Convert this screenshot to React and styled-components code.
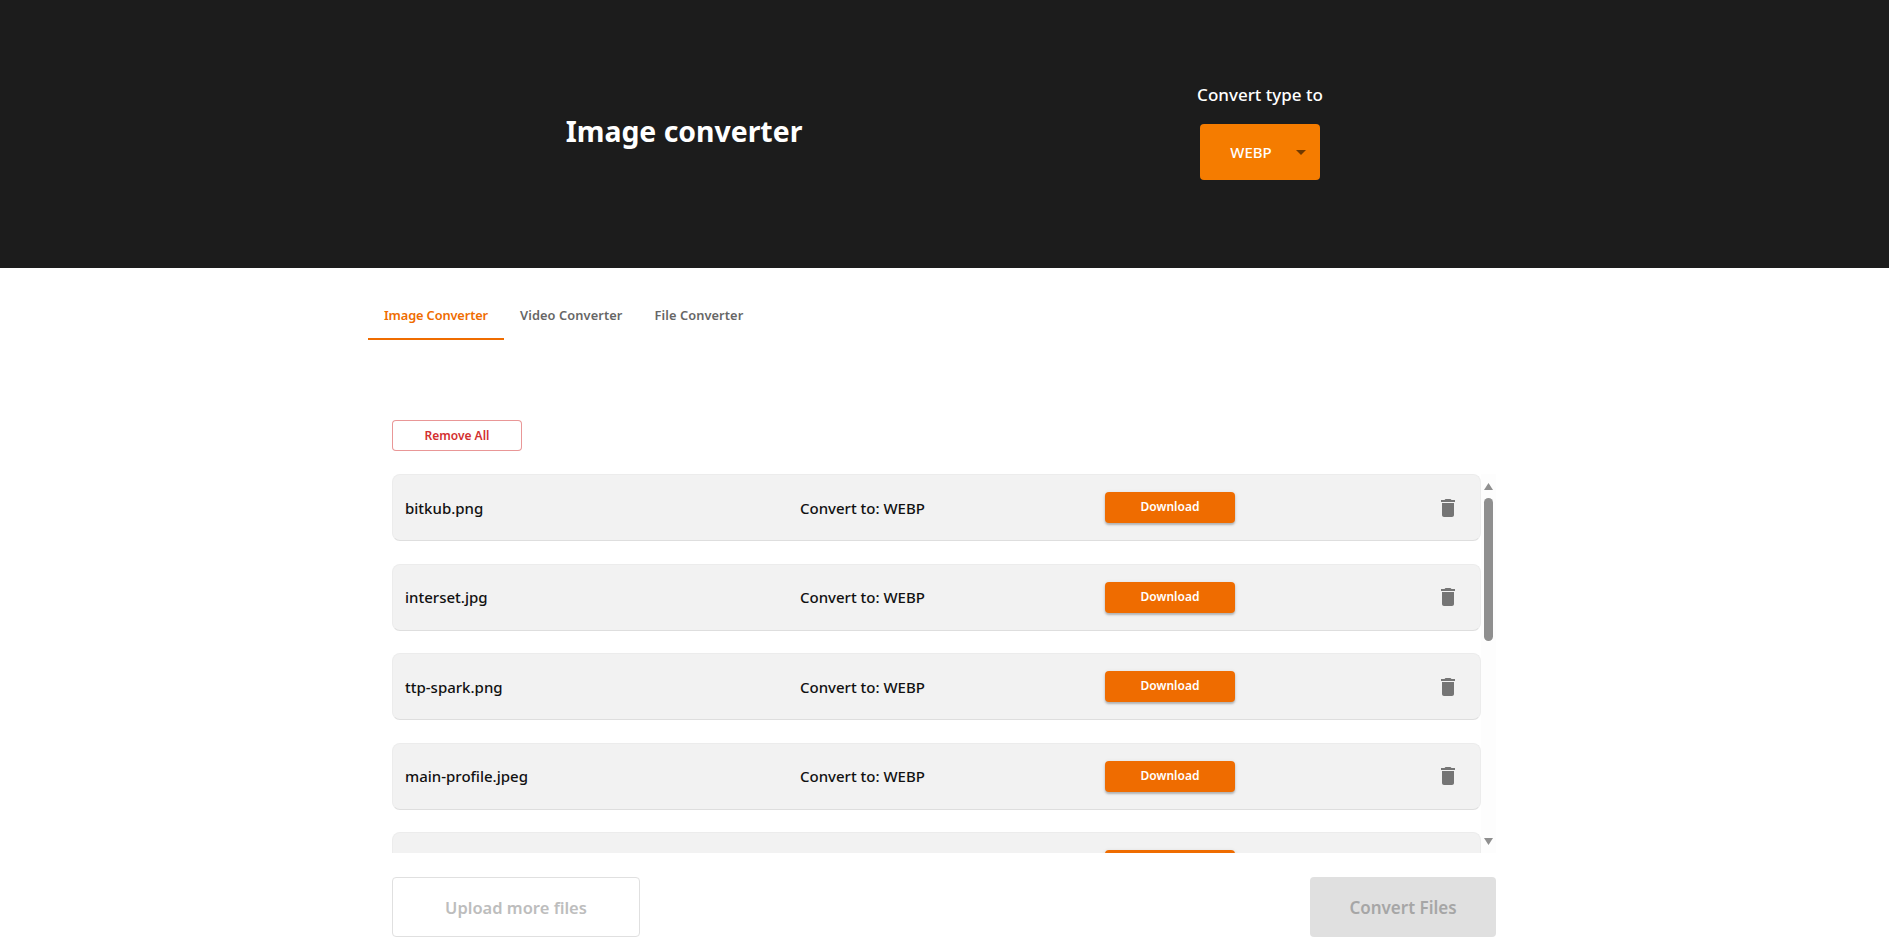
import React from 'react'
import styled, { createGlobalStyle } from 'styled-components'

// the fifth row is cut off by the list, only its top edge and button show
const files = ['bitkub.png', 'interset.jpg', 'ttp-spark.png', 'main-profile.jpeg', null]
const tabs = ['Image Converter', 'Video Converter', 'File Converter']

const DeleteIcon = () => (
  <svg width='24' height='24' viewBox='0 0 24 24' fill='currentColor'>
    <path d='M6 19c0 1.1.9 2 2 2h8c1.1 0 2-.9 2-2V7H6v12zM19 4h-3.5l-1-1h-5l-1 1H5v2h14V4z' />
  </svg>
)

const FileRow = ({ name }) => (
  <Row>
    <FileName>{name}</FileName>
    <Target>{name && 'Convert to: WEBP'}</Target>
    <div>
      <DownloadButton>{name && 'Download'}</DownloadButton>
    </div>
    <IconButton aria-label='delete'>
      <DeleteIcon />
    </IconButton>
  </Row>
)

export default function App() {
  return (
    <>
      <GlobalStyle />
      <Header>
        <Title>Image converter</Title>
        <TypePicker>
          <PickerLabel>Convert type to</PickerLabel>
          <Select>
            <SelectValue>WEBP</SelectValue>
            <SelectArrow width='24' height='24' viewBox='0 0 24 24' fill='currentColor'>
              <path d='M7 10l5 5 5-5z' />
            </SelectArrow>
          </Select>
        </TypePicker>
      </Header>
      <Main>
        <Tabs>
          {tabs.map((t, i) => (
            <Tab key={t} active={i === 0}>
              {t}
            </Tab>
          ))}
        </Tabs>
        <Panel>
          <RemoveAll>Remove All</RemoveAll>
          <ListBox>
            <FileList>
              {files.map((f, i) => (
                <FileRow key={i} name={f} />
              ))}
            </FileList>
            <ScrollRail>
              <svg width='9' height='7' viewBox='0 0 9 7' fill='currentColor'>
                <path d='M4.5 0L9 7H0z' />
              </svg>
              <ScrollThumb />
              <svg width='9' height='7' viewBox='0 0 9 7' fill='currentColor'>
                <path d='M0 0h9L4.5 7z' />
              </svg>
            </ScrollRail>
          </ListBox>
          <Footer>
            <UploadButton>Upload more files</UploadButton>
            <ConvertButton disabled>Convert Files</ConvertButton>
          </Footer>
        </Panel>
      </Main>
    </>
  )
}

const GlobalStyle = createGlobalStyle`
  html, body {
    margin: 0;
    height: 100%;
    overflow: hidden;
    background: #fff;
    font-family: 'Noto Sans', 'Open Sans', sans-serif;
  }
  button {
    font-family: inherit;
    cursor: pointer;
  }
`
const Header = styled.header`
  height: 268px;
  background: #1c1c1c;
  color: #fff;
  display: grid;
  grid-template-columns: 576px 576px;
  justify-content: center;
  padding-left: 55px;
  box-sizing: border-box;
`
const Title = styled.h1`
  margin: 0;
  align-self: start;
  justify-self: center;
  padding-top: 110px;
  font-size: 28.4px;
  line-height: 42px;
  font-weight: 700;
`
const TypePicker = styled.div`
  display: flex;
  flex-direction: column;
  align-items: center;
  padding-top: 82px;
`
const PickerLabel = styled.div`
  font-size: 17px;
  line-height: 26px;
  font-weight: 500;
  margin-bottom: 16px;
`
const Select = styled.div`
  width: 120px;
  height: 56px;
  box-sizing: border-box;
  padding-right: 7px;
  display: flex;
  align-items: center;
  background: #f57c00;
  border-radius: 4px;
`
const SelectValue = styled.span`
  flex: 1;
  text-align: center;
  font-size: 15px;
  font-weight: 500;
`
const SelectArrow = styled.svg`
  margin-left: -13px;
  color: rgba(0, 0, 0, 0.54);
`
const Main = styled.main`
  width: 1152px;
  margin: 24px 0 0 368px;
`
const Tabs = styled.nav`
  display: flex;
  height: 48px;
`
const Tab = styled.div`
  padding: 0 16px;
  display: flex;
  align-items: center;
  font-size: 12.8px;
  font-weight: 600;
  letter-spacing: ${props => (props.active ? '-0.12px' : '0.1px')};
  color: ${props => (props.active ? '#ef6c00' : '#666')};
  border-bottom: 2px solid ${props => (props.active ? '#ef6c00' : 'transparent')};
`
const Panel = styled.section`
  padding: 80px 24px 0;
`
const RemoveAll = styled.button`
  display: block;
  width: 130px;
  height: 31px;
  padding: 0;
  background: #fff;
  color: #d32f2f;
  border: 1px solid rgba(211, 47, 47, 0.5);
  border-radius: 4px;
  font-size: 12px;
  font-weight: 600;
`
const ListBox = styled.div`
  margin-top: 23px;
  height: 379px;
  display: flex;
`
const FileList = styled.div`
  flex: 1;
  min-width: 0;
  overflow: hidden;
  display: flex;
  flex-direction: column;
  gap: 22.5px;
`
const ScrollRail = styled.div`
  flex: none;
  width: 15px;
  box-sizing: border-box;
  padding: 9px 0 8px;
  display: flex;
  flex-direction: column;
  align-items: center;
  justify-content: space-between;
  background: #fdfdfd;
  color: #8f8f8f;
`
const ScrollThumb = styled.div`
  width: 9px;
  height: 143px;
  margin-bottom: auto;
  margin-top: 8px;
  background: #8f8f8f;
  border-radius: 5px;
`
const Row = styled.div`
  flex: none;
  height: 67px;
  box-sizing: border-box;
  padding: 0 20px 0 12px;
  display: grid;
  grid-template-columns: 395px 305px 1fr auto;
  align-items: center;
  background: #f2f2f2;
  border: 1px solid #ececec;
  border-bottom-color: #dedede;
  border-radius: 8px;
`
const FileName = styled.div`
  font-size: 15px;
  font-weight: 500;
  color: #111;
`
const Target = styled.div`
  font-size: 15px;
  font-weight: 500;
  color: #111;
`
const DownloadButton = styled.button`
  display: block;
  width: 130px;
  height: 31px;
  padding: 0 0 2px;
  background: #ef6c00;
  color: #fff;
  border: 0;
  border-radius: 4px;
  font-size: 12px;
  font-weight: 600;
  box-shadow: 0 2px 2px rgba(0, 0, 0, 0.2), 0 1px 4px rgba(0, 0, 0, 0.12);
`
const IconButton = styled.button`
  display: flex;
  padding: 0;
  border: 0;
  background: none;
  color: #757575;
`
const Footer = styled.div`
  margin-top: 24px;
  display: flex;
  justify-content: space-between;
`
const UploadButton = styled.button`
  width: 248px;
  height: 60px;
  padding: 0;
  background: #fff;
  color: #bdbdbd;
  border: 1px solid #e0e0e0;
  border-radius: 4px;
  font-size: 16.5px;
  font-weight: 600;
`
const ConvertButton = styled.button`
  width: 186px;
  height: 60px;
  padding: 0;
  background: #e0e0e0;
  color: #a6a6a6;
  border: 0;
  border-radius: 4px;
  font-size: 17px;
  font-weight: 600;
`
